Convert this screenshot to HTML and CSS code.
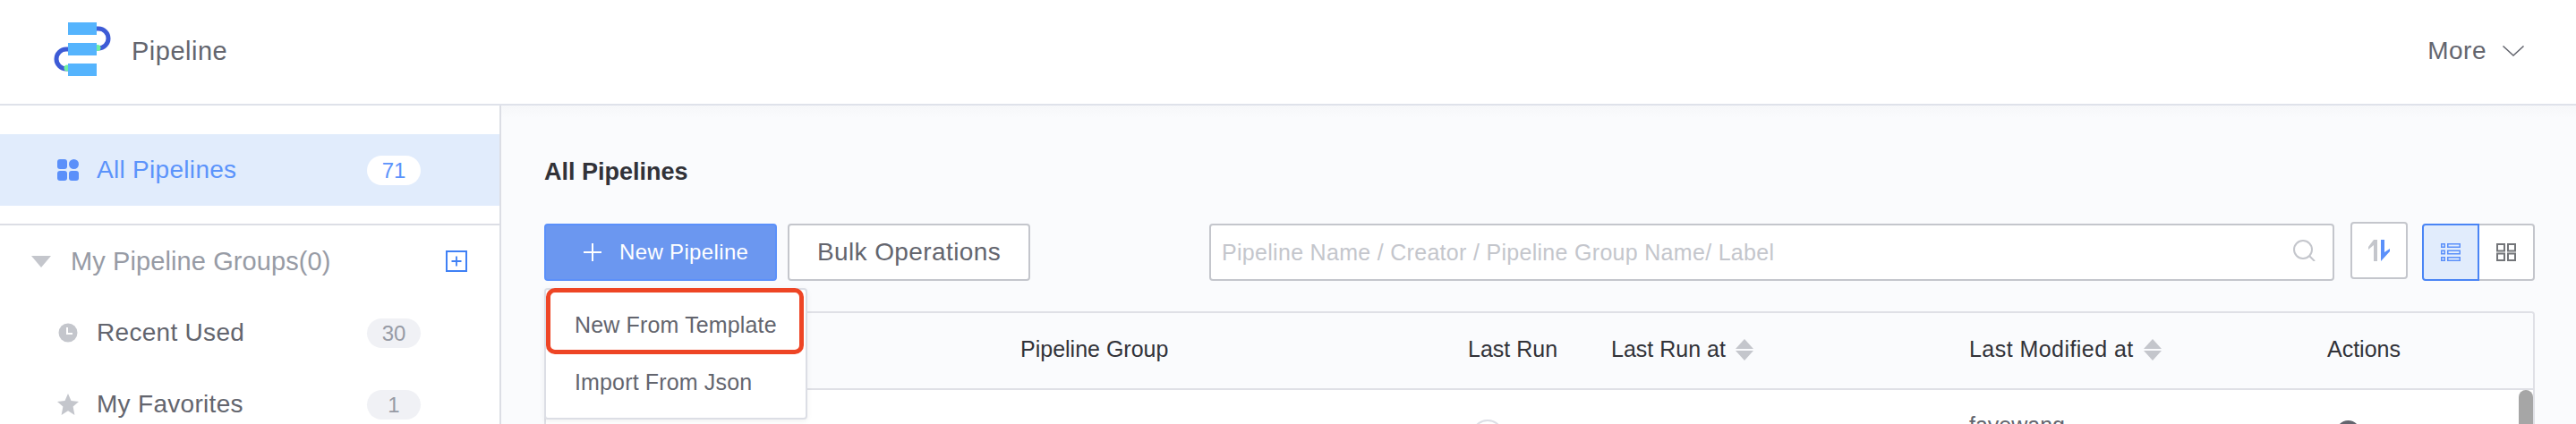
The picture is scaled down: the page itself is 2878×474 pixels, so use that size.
FILE: index.html
```html
<!DOCTYPE html>
<html lang="en">

<head>
    <meta charset="UTF-8">
    <meta name="viewport" content="width=device-width, initial-scale=1.0">
    <title>Pipeline</title>
    <link rel="stylesheet" href="styles.css">
</head>

<body>
    <!-- top bar -->
    <header class="topbar">
        <a class="brand" href="#">
            <svg class="brand-logo" width="64" height="60" viewBox="0 0 64 60">
                <path d="M48 7h2a11 11 0 0 1 0 22h-2" fill="none" stroke="#3d5bd6" stroke-width="5" />
                <path d="M16 30h-2a11 11 0 0 0 0 22h2" fill="none" stroke="#3d5bd6" stroke-width="5" />
                <circle cx="49" cy="28.5" r="3.5" fill="#6ff0a0" />
                <circle cx="15" cy="51" r="3.5" fill="#6ff0a0" />
                <rect x="16" y="0" width="32" height="14" fill="#55b4fd" />
                <rect x="16" y="23" width="32" height="14" fill="#55b4fd" />
                <rect x="16" y="46" width="32" height="14" fill="#55b4fd" />
            </svg>
            <span class="brand-name">Pipeline</span>
        </a>
        <a class="more" href="#">
            <span>More</span>
            <svg width="24" height="12" viewBox="0 0 24 12">
                <path d="M.5.5 12 11 23.5.5" fill="none" stroke="#63656e" stroke-width="1.5" />
            </svg>
        </a>
    </header>

    <div class="layout">
        <!-- left nav -->
        <aside class="sidebar">
            <ul class="nav">
                <li class="nav-item active">
                    <svg class="nav-icon" width="24" height="24" viewBox="0 0 24 24" fill="#5b90fa">
                        <rect width="11" height="11" rx="3" />
                        <circle cx="18.5" cy="5.5" r="5.5" />
                        <rect y="13" width="11" height="11" rx="3" />
                        <rect x="13" y="13" width="11" height="11" rx="3" />
                    </svg>
                    <span>All Pipelines</span>
                    <b class="count">71</b>
                </li>
            </ul>
            <div class="nav-line"></div>
            <div class="group-title">
                <i class="caret"></i>
                <span>My Pipeline Groups(0)</span>
                <svg class="group-add" width="24" height="24" viewBox="0 0 24 24" fill="none" stroke="#3f80f5">
                    <rect x="1" y="1" width="22" height="22" stroke-width="2" />
                    <path d="M12 6.5v11M6.500 12h11" stroke-width="1.800" />
                </svg>
            </div>
            <ul class="nav">
                <li class="nav-item">
                    <svg class="nav-icon" width="24" height="24" viewBox="0 0 24 24">
                        <circle cx="12" cy="12" r="10.500" fill="#c4c6cc" />
                        <path d="M11 6v7h6" fill="none" stroke="#fff" stroke-width="2" />
                    </svg>
                    <span>Recent Used</span>
                    <b class="count">30</b>
                </li>
                <li class="nav-item">
                    <svg class="nav-icon" width="24" height="24" viewBox="0 0 24 24">
                        <path d="M12 0l3.500 8 8.500.9-6.400 5.700L19.400 24 12 19.200 4.600 24l1.800-9.400L0 8.900 8.500 8z" fill="#c4c6cc" />
                    </svg>
                    <span>My Favorites</span>
                    <b class="count">1</b>
                </li>
            </ul>
        </aside>

        <main class="content">
            <h2 class="page-title">All Pipelines</h2>

            <div class="toolbar">
                <div class="new-wrap">
                    <button class="btn btn-primary">
                        <svg width="20" height="20" viewBox="0 0 20 20">
                            <path d="M10 0v20M0 10h20" stroke="#fff" stroke-width="2" />
                        </svg>
                        <span>New Pipeline</span>
                    </button>
                    <!-- dropdown opened from New Pipeline -->
                    <ul class="dropdown">
                        <li>New From Template</li>
                        <li>Import From Json</li>
                        <li class="mark"></li>
                    </ul>
                </div>
                <button class="btn btn-bulk">Bulk Operations</button>

                <div class="search">
                    <input type="text" placeholder="Pipeline Name / Creator / Pipeline Group Name/ Label">
                    <svg width="25" height="24" viewBox="0 0 25 24" fill="none" stroke="#c4c6cc" stroke-width="2">
                        <circle cx="11" cy="11" r="10" />
                        <path d="M18 18l6 6" />
                    </svg>
                </div>

                <button class="icon-btn sort-btn">
                    <svg width="24" height="24" viewBox="0 0 24 24">
                        <path d="M10 0H6L0 8v3l6-5v18h4z" fill="#c4c6cc" />
                        <path d="M14 0h4v14l6-4v3L14 24z" fill="#5b90fa" />
                    </svg>
                </button>

                <div class="toggle">
                    <button class="icon-btn on">
                        <svg width="22" height="20" viewBox="0 0 22 20" fill="none" stroke="#5b90fa" stroke-width="1.500">
                            <rect x=".75" y=".75" width="3.500" height="3.500" />
                            <rect x="7.750" y=".75" width="13.500" height="3.500" />
                            <rect x=".75" y="8.250" width="3.500" height="3.500" />
                            <rect x="7.750" y="8.250" width="13.500" height="3.500" />
                            <rect x=".75" y="15.750" width="3.500" height="3.500" />
                            <rect x="7.750" y="15.750" width="13.500" height="3.500" />
                        </svg>
                    </button>
                    <button class="icon-btn">
                        <svg width="22" height="20" viewBox="0 0 22 20" fill="none" stroke="#737579" stroke-width="2">
                            <rect x="1" y="1" width="8" height="7.500" />
                            <rect x="13" y="1" width="8" height="7.500" />
                            <rect x="1" y="11.500" width="8" height="7.500" />
                            <rect x="13" y="11.500" width="8" height="7.500" />
                        </svg>
                    </button>
                </div>
            </div>

            <div class="table">
                <div class="row row-head">
                    <div></div>
                    <div>Pipeline Group</div>
                    <div>Last Run</div>
                    <div class="sortable">Last Run at <i class="sorter"></i></div>
                    <div class="sortable wide">Last Modified at <i class="sorter"></i></div>
                    <div>Actions</div>
                </div>
                <div class="row row-body">
                    <div></div>
                    <div></div>
                    <div><i class="run-dot"></i></div>
                    <div></div>
                    <div>fayewang</div>
                    <div><i class="more-dot"></i></div>
                </div>
                <div class="scroll-thumb"></div>
            </div>
        </main>
    </div>
</body>

</html>
```

FILE: styles.css
```css
* {
    margin: 0;
    padding: 0;
    box-sizing: border-box;
}

html,
body {
    height: 474px;
    overflow: hidden;
}

body {
    font-family: "Liberation Sans", Arial, sans-serif;
    color: #63656e;
    background-color: #fff;
}

ul {
    list-style: none;
}

a {
    color: inherit;
    text-decoration: none;
}

button {
    font-family: inherit;
    cursor: pointer;
}

/* top bar */
.topbar {
    height: 118px;
    border-bottom: 2px solid #dfe2ea;
    padding: 0 58px 0 60px;
    display: flex;
    align-items: center;
    justify-content: space-between;
}

.brand {
    display: flex;
    align-items: center;
    gap: 23px;
}

.brand-logo {
    margin-top: -6px;
}

.brand-name {
    font-size: 29px;
    letter-spacing: .5px;
    margin-top: -2px;
}

.more {
    display: flex;
    align-items: center;
    gap: 18px;
    font-size: 28px;
    letter-spacing: .5px;
    margin-top: -2px;
}

/* left nav */
.layout {
    display: flex;
    height: 356px;
    overflow: hidden;
}

.sidebar {
    width: 560px;
    flex-shrink: 0;
    padding-top: 32px;
    border-right: 2px solid #dcdee5;
}

.nav-item {
    height: 80px;
    padding: 0 88px 0 64px;
    display: flex;
    align-items: center;
    gap: 20px;
    font-size: 28px;
    letter-spacing: .3px;
}

.nav-item.active {
    background-color: #e1ecfc;
    color: #5b93fb;
}

.count {
    margin-left: auto;
    width: 60px;
    height: 33px;
    border-radius: 17px;
    background-color: #f0f1f5;
    color: #979ba5;
    font-size: 24px;
    font-weight: normal;
    letter-spacing: 0;
    line-height: 33px;
    text-align: center;
}

.active .count {
    background-color: #fff;
    color: #5b93fb;
}

.nav-line {
    height: 2px;
    margin-top: 20px;
    background-color: #dcdee5;
}

.group-title {
    height: 80px;
    padding: 0 36px 0 35px;
    display: flex;
    align-items: center;
    font-size: 29px;
    letter-spacing: .1px;
    color: #979ba5;
}

.caret {
    width: 0;
    height: 0;
    margin-right: 22px;
    border-left: 11px solid transparent;
    border-right: 11px solid transparent;
    border-top: 13px solid #c4c6cc;
}

.group-add {
    margin-left: auto;
}

/* main area */
.content {
    flex: 1;
    min-width: 0;
    padding: 54px 46px 0 48px;
    background: linear-gradient(#f6f7f9, #fafbfd 14px);
}

.page-title {
    font-size: 27px;
    line-height: 40px;
    font-weight: bold;
    color: #313238;
}

.toolbar {
    margin-top: 38px;
    height: 64px;
    display: flex;
}

.new-wrap {
    position: relative;
    margin-right: 12px;
}

.btn {
    height: 64px;
    border-radius: 4px;
    display: flex;
    align-items: center;
    justify-content: center;
}

.btn-primary {
    width: 260px;
    padding-left: 42px;
    justify-content: flex-start;
    gap: 20px;
    background-color: #6b97f0;
    border: 2px solid #5b90fa;
    color: #fff;
    font-size: 24px;
    letter-spacing: .35px;
}

.btn-bulk {
    width: 271px;
    background-color: #fff;
    border: 2px solid #c4c6cc;
    color: #63656e;
    font-size: 28px;
    letter-spacing: .4px;
}

.dropdown {
    position: absolute;
    z-index: 10;
    left: 0;
    top: 72px;
    width: 294px;
    height: 147px;
    padding-top: 7px;
    background-color: #fff;
    border: 2px solid #dcdee5;
    border-radius: 4px;
    box-shadow: 0 2px 6px rgba(0, 0, 0, .06);
}

.dropdown li {
    height: 64px;
    line-height: 64px;
    padding-left: 32px;
    font-size: 25px;
    letter-spacing: .15px;
}

.dropdown .mark {
    position: absolute;
    left: 0;
    top: -2px;
    width: 288px;
    height: 74px;
    border: 5px solid #ee4525;
    border-radius: 10px;
    padding: 0;
}

.search {
    position: relative;
    flex: 1;
    margin-left: 200px;
}

.search input {
    width: 100%;
    height: 64px;
    padding: 0 60px 0 12px;
    background-color: #fff;
    border: 2px solid #c4c6cc;
    border-radius: 4px;
    font-family: inherit;
    font-size: 25px;
    letter-spacing: .3px;
    outline: none;
}

.search input::placeholder {
    color: #c4c6cc;
    opacity: 1;
}

.search svg {
    position: absolute;
    right: 21px;
    top: 18px;
}

.icon-btn {
    width: 64px;
    height: 64px;
    background-color: #fff;
    border: 2px solid #c4c6cc;
    border-radius: 4px;
    display: flex;
    align-items: center;
    justify-content: center;
}

.sort-btn {
    margin: -2px 16px 0 18px;
}

.toggle {
    display: flex;
}

.toggle .icon-btn {
    border-radius: 0 4px 4px 0;
    border-left: 0;
    width: 62px;
}

.toggle .icon-btn.on {
    width: 64px;
    border: 2px solid #4a85f5;
    border-radius: 4px 0 0 4px;
    background-color: #e1ecfc;
}

/* table */
.table {
    position: relative;
    margin-top: 34px;
    height: 126px;
    background-color: #fff;
    border: 2px solid #dfe0e6;
    border-bottom: 0;
    border-radius: 4px 4px 0 0;
    overflow: hidden;
}

.row {
    display: grid;
    grid-template-columns: 530px 500px 160px 400px 400px 1fr;
    font-size: 25px;
}

.row-head {
    height: 86px;
    padding-bottom: 3px;
    align-items: center;
    background-color: #fafbfd;
    border-bottom: 2px solid #dfe0e6;
    color: #313238;
}

.sortable {
    display: flex;
    align-items: center;
    gap: 11px;
}

.sortable.wide {
    letter-spacing: .45px;
}

.sorter {
    display: flex;
    flex-direction: column;
    gap: 2px;
}

.sorter::before,
.sorter::after {
    content: "";
    border-left: 10px solid transparent;
    border-right: 10px solid transparent;
}

.sorter::before {
    border-bottom: 11px solid #c4c6cc;
}

.sorter::after {
    border-top: 11px solid #c4c6cc;
}

.row-body {
    padding-top: 23px;
    line-height: 32px;
    color: #63656e;
}

.run-dot {
    display: block;
    width: 36px;
    height: 36px;
    margin: 10px 0 0 4px;
    border: 2px solid #dcdee5;
    border-radius: 50%;
}

.more-dot {
    display: block;
    width: 27px;
    height: 27px;
    margin: 11px 0 0 10px;
    border: 4px solid #63656e;
    border-radius: 50%;
}

.scroll-thumb {
    position: absolute;
    right: 0;
    top: 86px;
    width: 16px;
    height: 60px;
    background-color: #a6a6a6;
    border-radius: 8px 8px 0 0;
}
```
